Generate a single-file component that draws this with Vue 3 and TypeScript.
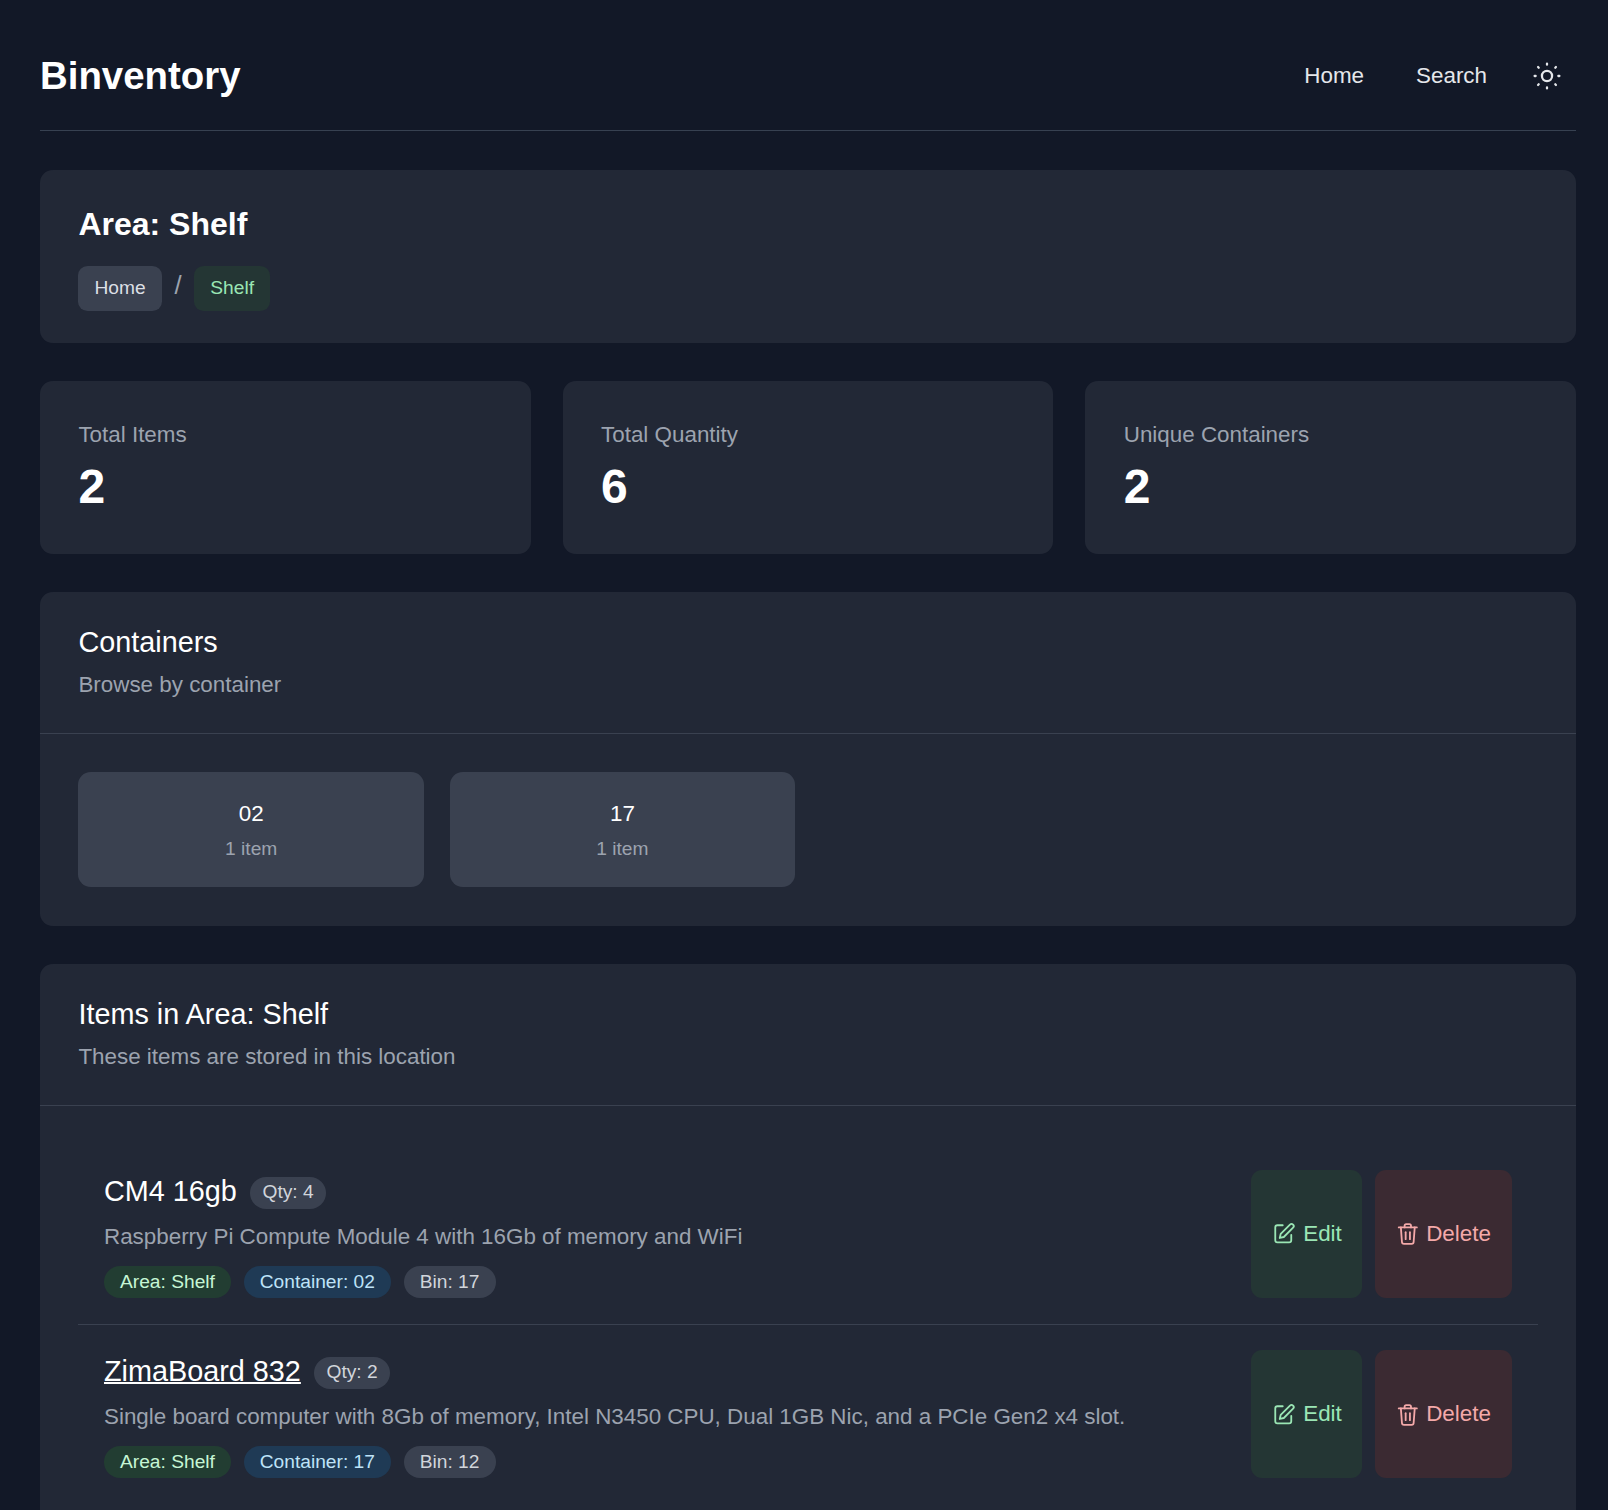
<template>
  <div class="page">
    <header class="topbar">
      <h1 class="brand">Binventory</h1>
      <nav class="nav">
        <a class="nav-link">Home</a>
        <a class="nav-link">Search</a>
        <button class="theme-btn" type="button" aria-label="Toggle theme">
          <svg viewBox="0 0 24 24" fill="none" stroke="currentColor" stroke-width="1.7" stroke-linecap="round" stroke-linejoin="round">
            <circle cx="12" cy="12" r="3.8" />
            <path d="M12 2.7v.8M12 20.5v.8M2.7 12h.8M20.5 12h.8M5.3 5.3l.5.5M18.2 18.2l.5.5M5.3 18.7l.5-.5M18.2 5.8l.5-.5" />
          </svg>
        </button>
      </nav>
    </header>

    <section class="card hero">
      <h2 class="hero-title">Area: Shelf</h2>
      <div class="crumbs">
        <a class="crumb">Home</a>
        <span class="crumb-sep">/</span>
        <a class="crumb current">Shelf</a>
      </div>
    </section>

    <section class="stats">
      <div v-for="stat in stats" :key="stat.label" class="card stat">
        <div class="stat-label">{{ stat.label }}</div>
        <div class="stat-value">{{ stat.value }}</div>
      </div>
    </section>

    <section class="card panel">
      <div class="panel-head">
        <h3 class="panel-title">Containers</h3>
        <p class="panel-sub">Browse by container</p>
      </div>
      <div class="panel-body container-grid">
        <a v-for="box in containers" :key="box.name" class="box">
          <div class="box-name">{{ box.name }}</div>
          <div class="box-count">{{ box.count }}</div>
        </a>
      </div>
    </section>

    <section class="card panel">
      <div class="panel-head">
        <h3 class="panel-title">Items in Area: Shelf</h3>
        <p class="panel-sub">These items are stored in this location</p>
      </div>
      <div class="panel-body items-body">
        <div v-for="item in items" :key="item.name" class="row">
          <div class="row-main">
            <div class="row-title">
              <a class="item-name" :class="{ hovered: item.hovered }">{{ item.name }}</a>
              <span class="pill qty">Qty: {{ item.qty }}</span>
            </div>
            <p class="item-desc">{{ item.desc }}</p>
            <div class="tags">
              <span class="pill area">Area: {{ item.area }}</span>
              <span class="pill box-tag">Container: {{ item.container }}</span>
              <span class="pill bin">Bin: {{ item.bin }}</span>
            </div>
          </div>
          <div class="actions">
            <button class="btn edit" type="button">
              <svg viewBox="0 0 24 24" fill="none" stroke="currentColor" stroke-width="1.7" stroke-linecap="round" stroke-linejoin="round">
                <path d="M11 4H6a2 2 0 0 0-2 2v12a2 2 0 0 0 2 2h11a2 2 0 0 0 2-2v-5" />
                <path d="M17.8 3.4a2 2 0 0 1 2.9 2.9L12 15l-3.8.9.9-3.8 8.7-8.7Z" />
              </svg>
              Edit
            </button>
            <button class="btn delete" type="button">
              <svg viewBox="0 0 24 24" fill="none" stroke="currentColor" stroke-width="1.7" stroke-linecap="round" stroke-linejoin="round">
                <path d="M3.5 6h17" />
                <path d="M5.5 6l1 13.5a2 2 0 0 0 2 2h7a2 2 0 0 0 2-2l1-13.5" />
                <path d="M9 6V4.5A1.5 1.5 0 0 1 10.5 3h3A1.5 1.5 0 0 1 15 4.5V6" />
                <path d="M10 10.5v6.5" />
                <path d="M14 10.5v6.5" />
              </svg>
              Delete
            </button>
          </div>
        </div>
      </div>
    </section>
  </div>
</template>

<script setup lang="ts">
interface Item {
  name: string
  qty: number
  desc: string
  area: string
  container: string
  bin: string
  hovered?: boolean
}

const stats = [
  { label: 'Total Items', value: 2 },
  { label: 'Total Quantity', value: 6 },
  { label: 'Unique Containers', value: 2 }
]

const containers = [
  { name: '02', count: '1 item' },
  { name: '17', count: '1 item' }
]

const items: Item[] = [
  {
    name: 'CM4 16gb',
    qty: 4,
    desc: 'Raspberry Pi Compute Module 4 with 16Gb of memory and WiFi',
    area: 'Shelf',
    container: '02',
    bin: '17'
  },
  {
    name: 'ZimaBoard 832',
    qty: 2,
    desc: 'Single board computer with 8Gb of memory, Intel N3450 CPU, Dual 1GB Nic, and a PCIe Gen2 x4 slot.',
    area: 'Shelf',
    container: '17',
    bin: '12',
    hovered: true
  }
]
</script>

<style>
body {
  margin: 0;
  background: #121827;
}
</style>

<style scoped>
.page {
  box-sizing: border-box;
  height: 100vh;
  overflow: hidden;
  padding: 0 32px 0 40px;
  background: #121827;
  color: #fff;
  font-family: "Liberation Sans", Arial, sans-serif;
}

.topbar {
  display: flex;
  align-items: center;
  justify-content: space-between;
  height: 131px;
  box-sizing: border-box;
  padding-top: 22px;
  border-bottom: 1px solid #374151;
  margin-bottom: 39px;
}

.brand {
  margin: 0;
  font-size: 38.4px;
  font-weight: 700;
  line-height: 48px;
}

.nav {
  display: flex;
  align-items: center;
}

.nav-link {
  font-size: 22.4px;
  line-height: 32px;
  color: #e5e7eb;
  margin-right: 52px;
}

.nav-link + .nav-link {
  margin-right: 44px;
}

.theme-btn {
  display: block;
  width: 32px;
  height: 32px;
  padding: 0;
  margin-right: 13px;
  border: 0;
  background: none;
  color: #e5e7eb;
}

.theme-btn svg {
  display: block;
  width: 32px;
  height: 32px;
}

.card {
  background: #222836;
  border-radius: 12.8px;
  margin-bottom: 38.4px;
}

.hero {
  padding: 38.4px 38.4px 32px;
}

.hero-title {
  margin: 0 0 24.6px;
  font-size: 32px;
  font-weight: 700;
  line-height: 33px;
}

.crumbs {
  display: flex;
  align-items: center;
}

.crumb {
  padding: 8.6px 16px 10.6px;
  border-radius: 9.6px;
  background: #3a4150;
  color: #dcdfe5;
  font-size: 19.2px;
  line-height: 25.6px;
}

.crumb.current {
  background: #243634;
  color: #9ae6b4;
}

.crumb-sep {
  margin: 0 12.8px;
  color: #9ca3af;
  font-size: 25.6px;
  line-height: 32px;
  position: relative;
  top: -3px;
}

.stats {
  display: grid;
  grid-template-columns: repeat(3, 1fr);
  gap: 32px;
  margin-bottom: 38.4px;
}

.stat {
  padding: 38.4px;
  margin-bottom: 0;
}

.stat-label {
  color: #9ca3af;
  font-size: 22.4px;
  line-height: 30px;
}

.stat-value {
  margin-top: 8.4px;
  font-size: 48px;
  font-weight: 700;
  line-height: 57.6px;
}

.panel-head {
  padding: 32px 38.4px;
  border-bottom: 1px solid #3a4150;
}

.panel-title {
  margin: 0;
  font-size: 28.8px;
  font-weight: 400;
  line-height: 37px;
  padding-bottom: 7.8px;
}

.panel-sub {
  margin: 0;
  color: #9ca3af;
  font-size: 22.4px;
  line-height: 32px;
}

.panel-body {
  padding: 37.4px 38.4px 39.4px;
}

.items-body {
  padding: 38.4px;
}

.container-grid {
  display: grid;
  grid-template-columns: repeat(4, 1fr);
  gap: 25.6px;
}

.box {
  padding: 26.6px 25.6px 24.6px;
  border-radius: 12.8px;
  background: #3a4150;
  text-align: center;
}

.box-name {
  font-size: 22.4px;
  line-height: 32px;
  margin-bottom: 6.4px;
}

.box-count {
  color: #9ca3af;
  font-size: 19.2px;
  line-height: 25.6px;
}

.row {
  display: flex;
  justify-content: space-between;
  padding: 25.6px;
  border-bottom: 1px solid #3a4150;
}

.row:last-child {
  border-bottom: 0;
}

.row-title {
  display: flex;
  align-items: center;
  gap: 12.8px;
}

.item-name {
  font-size: 28.8px;
  line-height: 42.8px;
  margin-bottom: 2px;
}

.item-name.hovered {
  text-decoration: underline;
  text-decoration-thickness: 2px;
}

.item-desc {
  margin: 6px 0 13.2px;
  color: #9ca3af;
  font-size: 22.4px;
  line-height: 32px;
}

.tags {
  display: flex;
  gap: 12.8px;
}

.pill {
  padding: 3.2px 16px;
  border-radius: 999px;
  font-size: 19.2px;
  line-height: 25.6px;
}

.pill.qty {
  padding: 2.7px 12.8px 3.7px;
  background: #3a4150;
  color: #d1d5db;
}

.pill.area {
  padding-top: 2.7px;
  padding-bottom: 3.7px;
  background: #223d32;
  color: #c6f6d5;
}

.pill.box-tag {
  padding-top: 2.7px;
  padding-bottom: 3.7px;
  background: #1f3a55;
  color: #bee3f8;
}

.pill.bin {
  padding: 2.7px 17px 3.7px 16px;
  background: #3a4150;
  color: #d1d5db;
}

.actions {
  display: flex;
  gap: 12.8px;
}

.btn {
  display: flex;
  align-items: center;
  border: 0;
  border-radius: 11px;
  font-family: inherit;
  font-size: 22.4px;
  line-height: 32px;
}

.btn svg {
  width: 25.6px;
  height: 25.6px;
}

.btn.edit {
  gap: 6.4px;
  padding: 0 20.4px 0 20px;
  background: #243634;
  color: #9ae6b4;
}

.btn.delete {
  gap: 5.6px;
  padding: 0 21.1px 0 20px;
  background: #3b2a32;
  color: #f4a9a9;
}
</style>
